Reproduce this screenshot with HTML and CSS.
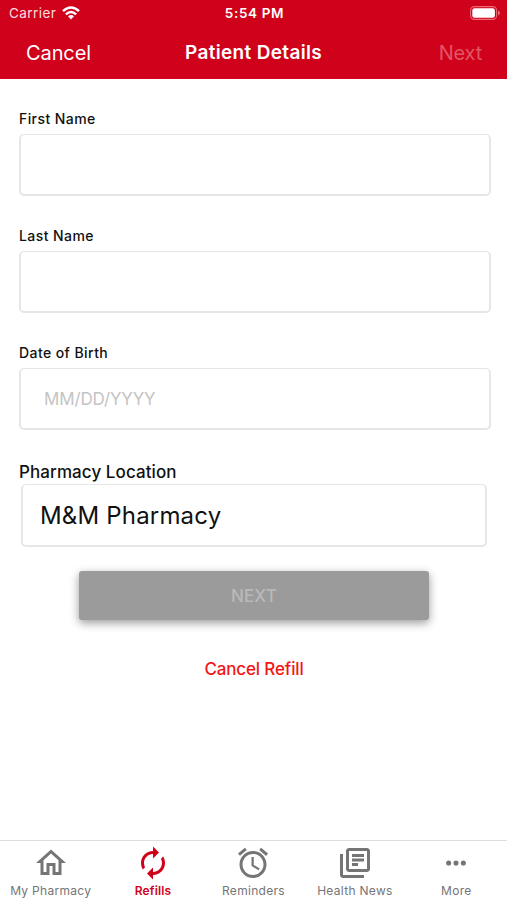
FILE: index.html
```html
<!DOCTYPE html>
<html lang="en">
<head>
<meta charset="utf-8">
<title>Patient Details</title>
<link rel="stylesheet" href="styles.css">
</head>
<body>
<header class="header">
  <div class="status">
    <div class="carrier"><span>Carrier</span>
      <svg class="wifi" viewBox="0 0 18 14"><g fill="none" stroke="#fff" stroke-width="2.5"><path d="M1 5.2Q9-2.3 17 5.2"/><path d="M3.9 8.4Q9 3.6 14.1 8.4"/></g><path fill="#fff" d="M6 10.3Q9 7.5 12 10.3L9 13.6z"/></svg>
    </div>
    <span class="time">5:54 PM</span>
    <svg class="battery" viewBox="0 0 30 14"><rect x=".6" y=".6" width="26" height="12.8" rx="3.8" fill="none" stroke="#ec6874" stroke-width="1.1"/><rect x="2.3" y="2.3" width="22.6" height="9.4" rx="2.3" fill="#fff"/><path fill="#ec6874" d="M28 4.5q2 .8 2 2.5t-2 2.5z"/></svg>
  </div>
  <nav class="nav">
    <span class="cancel">Cancel</span>
    <h1 class="title">Patient Details</h1>
    <span class="next">Next</span>
  </nav>
</header>
<main class="form">
  <label class="field"><span class="label">First Name</span><input class="input" type="text"></label>
  <label class="field"><span class="label">Last Name</span><input class="input" type="text"></label>
  <label class="field"><span class="label">Date of Birth</span><input class="input" type="text" placeholder="MM/DD/YYYY"></label>
  <div class="location"><span class="location-label">Pharmacy Location</span><div class="select">M&amp;M Pharmacy</div></div>
  <button class="submit" disabled>NEXT</button>
  <a class="cancel-refill">Cancel Refill</a>
</main>
<footer class="tabs">
  <div class="tab"><svg viewBox="0 0 24 24"><path d="M12 5.69l5 4.5V18h-2v-6H9v6H7v-7.81l5-4.5M12 3L2 12h3v8h6v-6h2v6h6v-8h3L12 3z"/></svg><span>My Pharmacy</span></div>
  <div class="tab active"><svg viewBox="0 0 24 24"><path d="M12 6v3l4-4-4-4v3c-4.42 0-8 3.58-8 8 0 1.57.46 3.03 1.24 4.26L6.7 14.8c-.45-.83-.7-1.79-.7-2.8 0-3.31 2.69-6 6-6zm6.76 1.74L17.3 9.2c.44.84.7 1.79.7 2.8 0 3.31-2.69 6-6 6v-3l-4 4 4 4v-3c4.42 0 8-3.58 8-8 0-1.57-.46-3.03-1.24-4.26z"/></svg><span>Refills</span></div>
  <div class="tab"><svg viewBox="0 0 24 24"><path d="M22 5.72l-4.6-3.86-1.29 1.53 4.6 3.86L22 5.72zM7.88 3.39L6.6 1.86 2 5.71l1.29 1.53 4.59-3.85zM12.5 8H11v6l4.75 2.85.75-1.23-4-2.37V8zM12 4c-4.97 0-9 4.03-9 9s4.02 9 9 9c4.97 0 9-4.03 9-9s-4.03-9-9-9zm0 16c-3.87 0-7-3.13-7-7s3.13-7 7-7 7 3.13 7 7-3.13 7-7 7z"/></svg><span>Reminders</span></div>
  <div class="tab"><svg viewBox="0 0 24 24"><path d="M4 6H2v14c0 1.1.9 2 2 2h14v-2H4V6zm16-4H8c-1.1 0-2 .9-2 2v12c0 1.1.9 2 2 2h12c1.1 0 2-.9 2-2V4c0-1.1-.9-2-2-2zm0 14H8V4h12v12zM10 9h8v2h-8zm0 3h4v2h-4zm0-6h8v2h-8z"/></svg><span>Health News</span></div>
  <div class="tab"><svg viewBox="0 0 24 24"><circle cx="7.1" cy="12" r="1.7"/><circle cx="12" cy="12" r="1.7"/><circle cx="16.9" cy="12" r="1.7"/></svg><span>More</span></div>
</footer>
</body>
</html>
```
FILE: styles.css
```css
* { box-sizing: border-box; }
body { margin: 0; height: 900px; display: flex; flex-direction: column; background: #fff; color: #111; font-family: Inter, "Liberation Sans", sans-serif; overflow: hidden; }
.header { height: 79px; flex: none; background: #d0021b; color: #fff; }
.status { height: 26px; padding: 0 7px 0 9px; display: grid; grid-template-columns: 1fr auto 1fr; align-items: center; font-size: 13.5px; }
.carrier { display: flex; align-items: center; gap: 6px; letter-spacing: .42px; color: #fbdde0; }
.wifi { width: 18px; height: 14px; }
.time { font-weight: 600; letter-spacing: .65px; }
.battery { width: 30px; height: 14px; justify-self: end; }
.nav { height: 53px; padding: 0 25px; display: grid; grid-template-columns: 1fr auto 1fr; align-items: center; }
.cancel { font-size: 20px; letter-spacing: -.1px; padding-left: 1px; }
.next { font-size: 20px; letter-spacing: -.2px; justify-self: end; color: #e25563; }
.title { margin: 0; font-size: 19px; font-weight: 600; letter-spacing: .33px; }
.form { flex: 1; display: flex; flex-direction: column; padding: 31px 16px 0 19px; }
.field { display: flex; flex-direction: column; height: 117px; }
.label { font-size: 14px; line-height: 18px; margin-bottom: 6px; font-weight: 550; letter-spacing: .42px; align-self: flex-start; }
.input { width: 100%; height: 62px; border: 2px solid #e6e6e6; border-top-width: 1px; border-radius: 5px; padding: 0 23px; background: #fff; font: 17px Inter, sans-serif; letter-spacing: -.15px; outline: 0; }
.input::placeholder { color: #c4c4c4; opacity: 1; }
.location-label { display: block; width: fit-content; font-size: 17px; font-weight: 550; line-height: 22px; letter-spacing: .08px; }
.select { margin: 1px 4px 0 2px; height: 63px; border: 2px solid #e6e6e6; border-top-width: 1px; border-radius: 5px; padding: 0 17px; display: flex; align-items: center; font-size: 24px; letter-spacing: .18px; }
.submit { align-self: center; width: 350px; height: 49px; margin: 24px 2px 0 0; border: 0; border-radius: 3px; background: #9b9b9b; color: #b9b9b9; font: 500 17px Inter, sans-serif; letter-spacing: .1px; box-shadow: 0 3px 10px rgba(0,0,0,.4); }
.cancel-refill { align-self: center; margin: 38px 2px 0 0; font-size: 17px; line-height: 22px; font-weight: 550; letter-spacing: -.15px; color: #f51414; }
.tabs { flex: none; height: 60px; border-top: 1px solid #dedede; display: grid; grid-template-columns: repeat(5, 1fr); color: #757575; }
.tab { display: flex; flex-direction: column; align-items: center; padding-top: 4px; font-size: 12px; line-height: 16px; letter-spacing: .3px; white-space: nowrap; }
.tab svg { width: 36px; height: 36px; fill: currentColor; }
.tab span { margin-top: 2px; }
.active { color: #d0021b; font-weight: 600; padding-left: 2px; letter-spacing: .15px; }
```
